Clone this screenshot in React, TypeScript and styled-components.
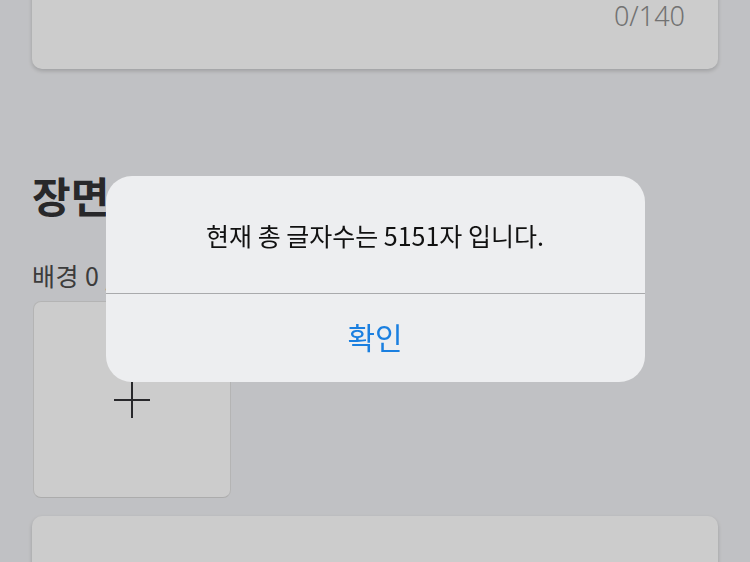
import React from "react";
import styled, { createGlobalStyle } from "styled-components";

const GlobalStyle = createGlobalStyle`
  html, body {
    margin: 0;
    padding: 0;
    background: #f1f2f5;
  }
  body {
    font-family: "Noto Sans CJK KR", "Noto Sans", sans-serif;
  }
`;

const Page = styled.div`
  padding: 0 32px;
  height: 562px;
  overflow: hidden;
  box-sizing: border-box;
`;

const Card = styled.div<{ $height: number; $offset?: number }>`
  background: #ffffff;
  border-radius: 10px;
  box-shadow: 0 2px 4px rgba(0, 0, 0, 0.18);
  height: ${(p) => p.$height}px;
  margin-top: ${(p) => p.$offset ?? 0}px;
  display: flex;
  flex-direction: column;
  justify-content: flex-end;
  align-items: flex-end;
  padding-right: 33px;
  box-sizing: border-box;
`;

const Counter = styled.span`
  font-family: "Noto Sans", sans-serif;
  font-weight: 300;
  font-size: 27px;
  line-height: 30px;
  color: #8f8f8f;
  margin-bottom: 38px;
`;

const SectionTitle = styled.h2`
  margin: 101px 0 0;
  font-size: 42px;
  line-height: 50px;
  font-weight: 700;
  color: #333335;
  white-space: nowrap;
`;

const SubLabel = styled.div`
  margin-top: 40px;
  font-size: 25px;
  line-height: 30px;
  color: #4b4b4b;
  letter-spacing: 0.5px;
  white-space: nowrap;
`;

const AddTile = styled.button`
  margin-top: 11px;
  margin-left: 1px;
  width: 198px;
  height: 197px;
  background: #ffffff;
  border: 1px solid #e2e2e2;
  border-bottom-color: #d8d8d8;
  border-radius: 8px;
  display: flex;
  align-items: center;
  justify-content: center;
  padding: 0;
`;

const Overlay = styled.div`
  position: fixed;
  inset: 0;
  background: rgba(0, 0, 0, 0.2);
  display: flex;
  align-items: center;
  justify-content: center;
  padding-bottom: 4px;
  box-sizing: border-box;
`;

const Dialog = styled.div`
  width: 539px;
  background: #edeef0;
  border-radius: 26px;
  overflow: hidden;
  display: flex;
  flex-direction: column;
`;

const Message = styled.div`
  height: 118px;
  display: flex;
  align-items: center;
  justify-content: center;
  font-size: 25px;
  color: #111111;
  border-bottom: 1px solid #a9aaac;
  box-sizing: border-box;
`;

const ConfirmButton = styled.button`
  height: 88px;
  border: none;
  background: transparent;
  font-family: "Noto Sans CJK KR", sans-serif;
  font-size: 30px;
  color: #1a7fe0;
  padding: 0 0 4px;
`;

export default function App() {
  return (
    <>
      <GlobalStyle />
      <Page>
        <Card $height={109} $offset={-40}>
          <Counter>0/140</Counter>
        </Card>
        <SectionTitle>장면 구성</SectionTitle>
        <SubLabel>배경 0 / 10</SubLabel>
        <AddTile aria-label="추가">
          <svg width="36" height="36" viewBox="0 0 36 36">
            <path d="M18 0v36M0 18h36" stroke="#333336" strokeWidth="2" />
          </svg>
        </AddTile>
        <Card $height={80} $offset={18} />
      </Page>
      <Overlay>
        <Dialog>
          <Message>현재 총 글자수는 5151자 입니다.</Message>
          <ConfirmButton>확인</ConfirmButton>
        </Dialog>
      </Overlay>
    </>
  );
}
